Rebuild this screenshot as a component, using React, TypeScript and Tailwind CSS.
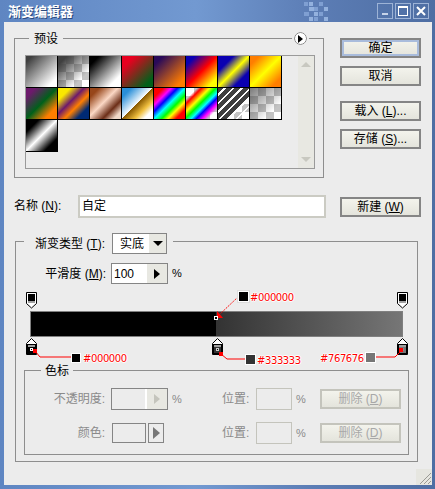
import React from "react";

const swatches: string[] = [
  "[background:linear-gradient(135deg,#404040_10%,#fff_85%)]",
  "[background:linear-gradient(135deg,#404040_15%,rgba(64,64,64,0)_75%),conic-gradient(#c4c4c4_25%,#fff_25%_50%,#c4c4c4_50%_75%,#fff_75%)_0_0/16px_16px]",
  "[background:linear-gradient(135deg,#000_15%,#fff_80%)]",
  "[background:linear-gradient(135deg,#e8001f_20%,#00601a_85%)]",
  "[background:linear-gradient(135deg,#290a59_15%,#ff7c00_85%)]",
  "[background:linear-gradient(135deg,#0a00b2_15%,#ff0000_50%,#fffc00_85%)]",
  "[background:linear-gradient(135deg,#0a00b2_25%,#ffff00_50%,#0a00b2_75%)]",
  "[background:linear-gradient(135deg,#ff7e00_15%,#ffff00_50%,#ff7e00_85%)]",
  "[background:linear-gradient(135deg,#6d1a6c_15%,#00601a_50%,#ff7e00_80%)]",
  "[background:linear-gradient(135deg,#f9e800_20%,#6d1a6c_42%,#ff7e00_60%,#002a74_80%)]",
  "[background:linear-gradient(135deg,#97461a_15%,#fbd8c5_45%,#6c2e17_70%,#f0d8c8_88%)]",
  "[background:linear-gradient(135deg,#2a8fd8_15%,#fff_50%,#8a5a00_50%,#f0c040_70%,#fff_85%)]",
  "[background:linear-gradient(135deg,#ff0000_15%,#ff00ff_28%,#0000ff_38%,#00ffff_50%,#00ff00_62%,#ffff00_72%,#ff0000_85%)]",
  "[background:linear-gradient(135deg,rgba(255,0,0,0)_18%,#ff0000_25%,#ffff00_38%,#00ff00_48%,#00ffff_58%,#0000ff_66%,#ff00ff_76%,rgba(255,0,255,0)_85%),conic-gradient(#c4c4c4_25%,#fff_25%_50%,#c4c4c4_50%_75%,#fff_75%)_0_0/16px_16px]",
  "[background:repeating-linear-gradient(135deg,rgba(255,255,255,0)_0_4px,#fff_4px_6px),linear-gradient(135deg,#404040_65%,rgba(64,64,64,0)_65%),conic-gradient(#c4c4c4_25%,#fff_25%_50%,#c4c4c4_50%_75%,#fff_75%)_0_0/16px_16px]",
  "[background:linear-gradient(135deg,rgba(64,64,64,0.7)_0%,rgba(64,64,64,0)_75%),conic-gradient(#c4c4c4_25%,#fff_25%_50%,#c4c4c4_50%_75%,#fff_75%)_0_0/16px_16px]",
  "[background:linear-gradient(135deg,#000_20%,#fff_50%,#000_80%)]",
];

function Btn({ children, def, disabled }: { children: React.ReactNode; def?: boolean; disabled?: boolean }) {
  return (
    <div
      className={
        "flex h-[20px] w-[81px] items-center justify-center border-2 bg-[linear-gradient(#f3f3ec,#e4e4dc)] " +
        (disabled ? "border-[#c4c4bc] text-[#a8a8a8] " : "border-[#858585] text-black ") +
        (def ? "shadow-[inset_0_0_0_2px_#a9bcdc]" : "")
      }
    >
      <span className="whitespace-pre">{children}</span>
    </div>
  );
}

function TopStop({ className }: { className: string }) {
  return (
    <svg className={"absolute " + className} width="12" height="17" viewBox="0 0 12 17">
      <path d="M0.5 0.5H10.5V11.5L5.5 16L0.5 11.5Z" fill="#fff" stroke="#000" />
      <rect x="2" y="2" width="7" height="7" fill="#000" />
      <rect x="2" y="9" width="7" height="2" fill="#a0a0a0" />
    </svg>
  );
}

function BottomStop({ className, fill, dot }: { className: string; fill: string; dot: string }) {
  return (
    <svg className={"absolute " + className} width="12" height="17" viewBox="0 0 12 17">
      <path d="M0.5 16.5V5.5L5.5 0.5L10.5 5.5V16.5Z" fill="#fff" stroke="#000" />
      <rect x="1" y="6" width="9" height="10" fill="#000" />
      <rect x="2" y="7" width="7" height="2" fill="#a0a0a0" />
      <rect x="2" y="9" width="7" height="6" fill={fill} />
      <rect x="4" y="10" width="3" height="3" fill={dot} />
      <rect x="5" y="11" width="1" height="1" fill="#000" />
    </svg>
  );
}

function Annot({ className }: { className: string }) {
  return <div className={"absolute " + className} />;
}

const label =
  "absolute text-[10px] leading-[11px] tracking-[-0.4px] text-[#ff0000] [font-family:'DejaVu_Sans',sans-serif] [text-shadow:1px_0_0_#fff,-1px_0_0_#fff,0_1px_0_#fff,0_-1px_0_#fff] ";

function Tri({ className }: { className: string }) {
  return <div className={"h-0 w-0 border-y-[5px] border-l-[6px] border-y-transparent " + className} />;
}

export default function App() {
  return (
    <div className="relative flex h-[489px] w-[435px] flex-col overflow-hidden bg-[linear-gradient(90deg,#5f86c2,#7299d1_45%,#5c7db5_72%,#4e6ea3)] text-[12px] leading-none text-black [font-family:'Liberation_Sans','Noto_Sans_CJK_SC',sans-serif]">
      {/* Title bar */}
      <div className="flex h-[22px] items-center pl-[8px] pr-[6px]">
        <span className="text-[13px] font-bold text-white [text-shadow:1px_1px_0_#2c4a80]">渐变编辑器</span>
        <svg className="ml-[231px]" width="28" height="22" viewBox="0 0 28 22">
          {[
            [0, 2, 4, 4], [5, 2, 4, 4], [15, 2, 4, 4], [5, 7, 5, 4], [10, 7, 4, 4], [20, 7, 4, 4],
            [0, 12, 5, 4], [10, 12, 4, 4], [15, 12, 4, 4], [5, 17, 4, 4], [10, 17, 4, 4], [20, 17, 4, 4],
          ].map(([x, y, w, h], i) => (
            <rect key={i} x={x} y={y} width={w} height={h} fill={i % 2 ? "#93b1de" : "#7f9fd2"} />
          ))}
        </svg>
        <div className="ml-auto flex gap-[2px]">
          <div className="flex h-[16px] w-[16px] items-end justify-center border border-[#9db3d6] pb-[3px]">
            <div className="h-[2px] w-[6px] bg-[#c6d3e8]" />
          </div>
          <div className="flex h-[16px] w-[16px] items-center justify-center border border-[#9db3d6]">
            <div className="h-[10px] w-[10px] border border-t-2 border-white" />
          </div>
          <div className="flex h-[16px] w-[16px] items-center justify-center border border-[#9db3d6]">
            <svg width="12" height="12" viewBox="0 0 12 12">
              <path d="M2 2L10 10M10 2L2 10" stroke="#fff" strokeWidth="2" />
            </svg>
          </div>
        </div>
      </div>

      {/* Body */}
      <div className="ml-[4px] mr-[3px] mb-[4px] flex-1 bg-[#ececec]">
        {/* Preset row */}
        <div className="flex pl-[10px] pt-[16px]">
          <div className="relative h-[140px] w-[310px] border border-[#8e8e8e] pl-[10px] pt-[16px]">
            <div className="absolute left-[14px] top-[-8px] bg-[#ececec] px-[5px] text-[12px] leading-[16px]">预设</div>
            <div className="absolute right-[16px] top-[-7px] flex h-[13px] w-[13px] items-center justify-center rounded-full border border-[#808080] bg-white outline-2 outline-[#ececec]">
              <div className="h-0 w-0 border-y-[4px] border-l-[5px] border-y-transparent border-l-black" />
            </div>
            <div className="flex h-[114px] w-[290px] border border-[#9a9a9a]">
              <div className="grid h-fit w-[256px] grid-cols-8">
                {swatches.map((s, i) => (
                  <div key={i} className="h-[32px] w-[32px] border-r border-b border-black">
                    <div className={"h-full w-full " + s} />
                  </div>
                ))}
              </div>
              <div className="ml-auto flex w-[16px] flex-col items-center justify-between bg-[#e8e8e2] py-[6px]">
                <div className="h-0 w-0 border-x-[5px] border-b-[5px] border-x-transparent border-b-[#c8c8c0]" />
                <div className="h-0 w-0 border-x-[5px] border-t-[5px] border-x-transparent border-t-[#c8c8c0]" />
              </div>
            </div>
          </div>
          <div className="ml-[16px] flex flex-col">
            <Btn def>确定</Btn>
            <div className="mt-[8px]"><Btn>取消</Btn></div>
            <div className="mt-[15px]"><Btn>载入 (<u>L</u>)...</Btn></div>
            <div className="mt-[8px]"><Btn>存储 (<u>S</u>)...</Btn></div>
          </div>
        </div>

        {/* Name row */}
        <div className="mt-[17px] flex items-center pl-[10px]">
          <span className="w-[64px] whitespace-pre pb-[2px]">名称 (<u>N</u>):</span>
          <div className="flex h-[23px] w-[248px] items-center border-2 border-[#cbcbc3] bg-white pb-[2px] pl-[2px]">自定</div>
          <div className="ml-[14px]"><Btn>新建 (<u>W</u>)</Btn></div>
        </div>

        {/* Gradient group */}
        <div className="relative ml-[11px] mt-[23px] h-[221px] w-[403px] border border-[#8e8e8e] pt-[21px]">
          <div className="absolute left-[8px] top-[-9px] flex items-center bg-[#ececec] pl-[11px] pr-[6px]">
            <span className="w-[77px] whitespace-pre">渐变类型 (<u>T</u>):</span>
            <div className="flex h-[21px] w-[55px] border border-[#858585] bg-white">
              <span className="flex flex-1 items-center pl-[7px]">实底</span>
              <div className="flex w-[17px] items-center justify-center bg-[#e8e8e2]">
                <div className="h-0 w-0 border-x-[5px] border-t-[5px] border-x-transparent border-t-black" />
              </div>
            </div>
          </div>

          <div className="flex items-center">
            <span className="w-[95px] whitespace-pre pr-[5px] text-right">平滑度 (<u>M</u>):</span>
            <div className="flex h-[21px] w-[57px] border border-[#858585] bg-white">
              <span className="flex flex-1 items-center pl-[2px]">100</span>
              <div className="flex w-[20px] items-center justify-center bg-[#e8e8e2]">
                <Tri className="border-l-black" />
              </div>
            </div>
            <span className="ml-[4px] text-[11px]">%</span>
          </div>

          <div className="ml-[14px] mt-[27px] h-[26px] w-[373px] border border-[#808080] bg-[linear-gradient(90deg,#000_0_50%,#333333_50%,#767676_100%)]" />

          {/* Colour stop group */}
          <div className="relative ml-[8px] mt-[33px] h-[85px] w-[385px] border border-[#8e8e8e] text-[#8a8a8a]">
            <div className="absolute left-[16px] top-[-8px] bg-[#ececec] px-[4px] text-[12px] leading-[16px] text-black">色标</div>
            <div className="mt-[17px] flex h-[22px] items-center">
              <span className="w-[86px] pr-[6px] text-right">不透明度:</span>
              <div className="flex h-[22px] w-[57px] border border-[#858585] bg-[#ececec]">
                <div className="flex-1 border-r-2 border-white" />
                <div className="flex w-[20px] items-center justify-center bg-[#e8e8e2]">
                  <Tri className="border-l-[#c4c4bc]" />
                </div>
              </div>
              <span className="ml-[4px] w-[50px] text-[11px]">%</span>
              <span className="w-[34px] whitespace-pre">位置:</span>
              <div className="h-[22px] w-[36px] border border-[#c4c4bc]" />
              <span className="ml-[4px] w-[24px] text-[11px]">%</span>
              <Btn disabled>删除 (<u>D</u>)</Btn>
            </div>
            <div className="mt-[12px] flex h-[22px] items-center">
              <span className="w-[87px] pr-[7px] text-right">颜色:</span>
              <div className="h-[20px] w-[34px] border border-[#858585]" />
              <div className="ml-[2px] flex h-[20px] w-[16px] items-center justify-center border border-[#858585]">
                <div className="h-0 w-0 border-y-[6px] border-l-[7px] border-y-transparent border-l-[#777]" />
              </div>
              <span className="w-[58px]" />
              <span className="w-[34px] whitespace-pre">位置:</span>
              <div className="h-[22px] w-[36px] border border-[#c4c4bc]" />
              <span className="ml-[4px] w-[24px] text-[11px]">%</span>
              <Btn disabled>删除 (<u>D</u>)</Btn>
            </div>
          </div>
        </div>
      </div>

      {/* Resize grip */}
      <div className="absolute bottom-[4px] right-[3px] h-[16px] w-[16px] bg-[#e6e6e0]">
        <svg width="16" height="16" viewBox="0 0 16 16">
          <path d="M4 15L15 4M8 15L15 8M12 15L15 12" stroke="#9a9a94" strokeWidth="1" />
        </svg>
      </div>

      {/* Stops */}
      <TopStop className="left-[26px] top-[292px]" />
      <TopStop className="left-[397px] top-[292px]" />
      <BottomStop className="left-[26px] top-[338px]" fill="#000" dot="#fff" />
      <BottomStop className="left-[212px] top-[338px]" fill="#333" dot="#ccc" />
      <BottomStop className="left-[397px] top-[338px]" fill="#767676" dot="#8a8a8a" />

      {/* Annotation lines */}
      <svg className="absolute left-0 top-0" width="435" height="489" viewBox="0 0 435 489">
        <path d="M238 297L219 315" stroke="#ff0000" strokeDasharray="1.5 1" fill="none" />
        <path d="M217 311V318H223Z" fill="#ff0000" />
        <path d="M35 351L40 357H71" stroke="#ff0000" fill="none" />
        <rect x="33" y="349" width="4" height="4" fill="#ff0000" />
        <path d="M221 354L227 359H245" stroke="#ff0000" fill="none" />
        <rect x="219" y="352" width="4" height="4" fill="#ff0000" />
        <path d="M375 357H395L402 350" stroke="#ff0000" fill="none" />
        <rect x="399" y="348" width="4" height="4" fill="#ff0000" />
        <rect x="214.5" y="316.5" width="3" height="3" fill="#000" stroke="#fff" strokeWidth="1" />
      </svg>

      {/* Annotation swatches and labels */}
      <Annot className="left-[238px] top-[291px] h-[11px] w-[11px] border border-white bg-black outline outline-1 outline-[#ddd]" />
      <span className={label + "left-[250px] top-[292px]"}>#000000</span>
      <Annot className="left-[71px] top-[353px] h-[10px] w-[10px] border border-white bg-black" />
      <span className={label + "left-[83px] top-[353px]"}>#000000</span>
      <Annot className="left-[245px] top-[354px] h-[11px] w-[11px] border border-white bg-[#333333]" />
      <span className={label + "left-[257px] top-[355px]"}>#333333</span>
      <span className={label + "left-[320px] top-[353px]"}>#767676</span>
      <Annot className="left-[365px] top-[352px] h-[11px] w-[11px] border border-white bg-[#767676]" />
    </div>
  );
}
